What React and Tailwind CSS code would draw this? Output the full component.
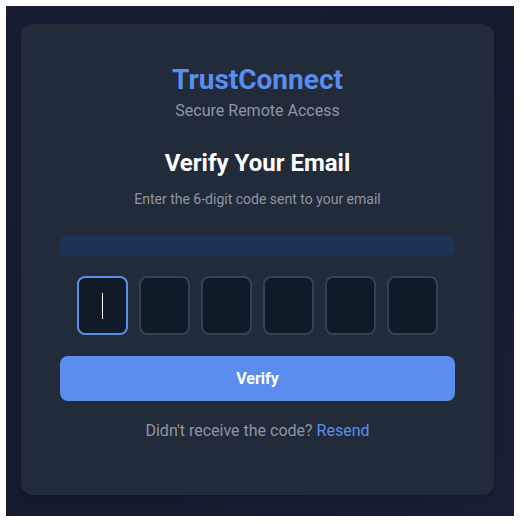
export default function App() {
  const digits = [0, 1, 2, 3, 4, 5];

  return (
    <div className="w-[524px] h-[524px] bg-white" style={{ fontFamily: "Roboto, 'Liberation Sans', sans-serif" }}>
      <div className="ml-[6px] pt-[6px]">
        <div className="w-[508px] h-[510px] bg-gradient-to-br from-[#181d33] via-[#151a2d] to-[#1a1f37] pl-[15px] pt-[18px]">
          {/* Card */}
          <div className="w-[473px] h-[471px] rounded-xl bg-[#222b3a] shadow-lg px-[39px] pt-[39px] flex flex-col items-center">
            <h1 className="text-[28px] leading-[34px] font-bold text-[#5b8def]">TrustConnect</h1>
            <p className="mt-0.5 text-base leading-6 text-[#8e96a2]">Secure Remote Access</p>

            <h2 className="mt-[24px] text-2xl leading-8 font-bold text-white">Verify Your Email</h2>
            <p className="mt-[10px] text-sm leading-5 text-[#8e96a2]">
              Enter the 6-digit code sent to your email
            </p>

            <div className="mt-[27px] w-full h-5 rounded-md bg-[#1c3358]" />

            {/* Code inputs */}
            <div className="mt-5 flex gap-[11px]">
              {digits.map((i) => (
                <div
                  key={i}
                  className={`w-[51px] h-[59px] rounded-lg border-2 bg-[#111a27] flex items-center justify-center ${
                    i === 0 ? "border-[#5b8def]" : "border-[#374151]"
                  }`}
                >
                  {i === 0 && <div className="w-px h-[26px] bg-white" />}
                </div>
              ))}
            </div>

            <button className="mt-[21px] w-full h-[45px] rounded-lg bg-[#5b8def] text-white text-base font-bold">
              Verify
            </button>

            <p className="mt-[18px] text-base leading-6 text-[#8e96a2]">
              Didn't receive the code? <span className="text-[#5b8def]">Resend</span>
            </p>
          </div>
        </div>
      </div>
    </div>
  );
}
